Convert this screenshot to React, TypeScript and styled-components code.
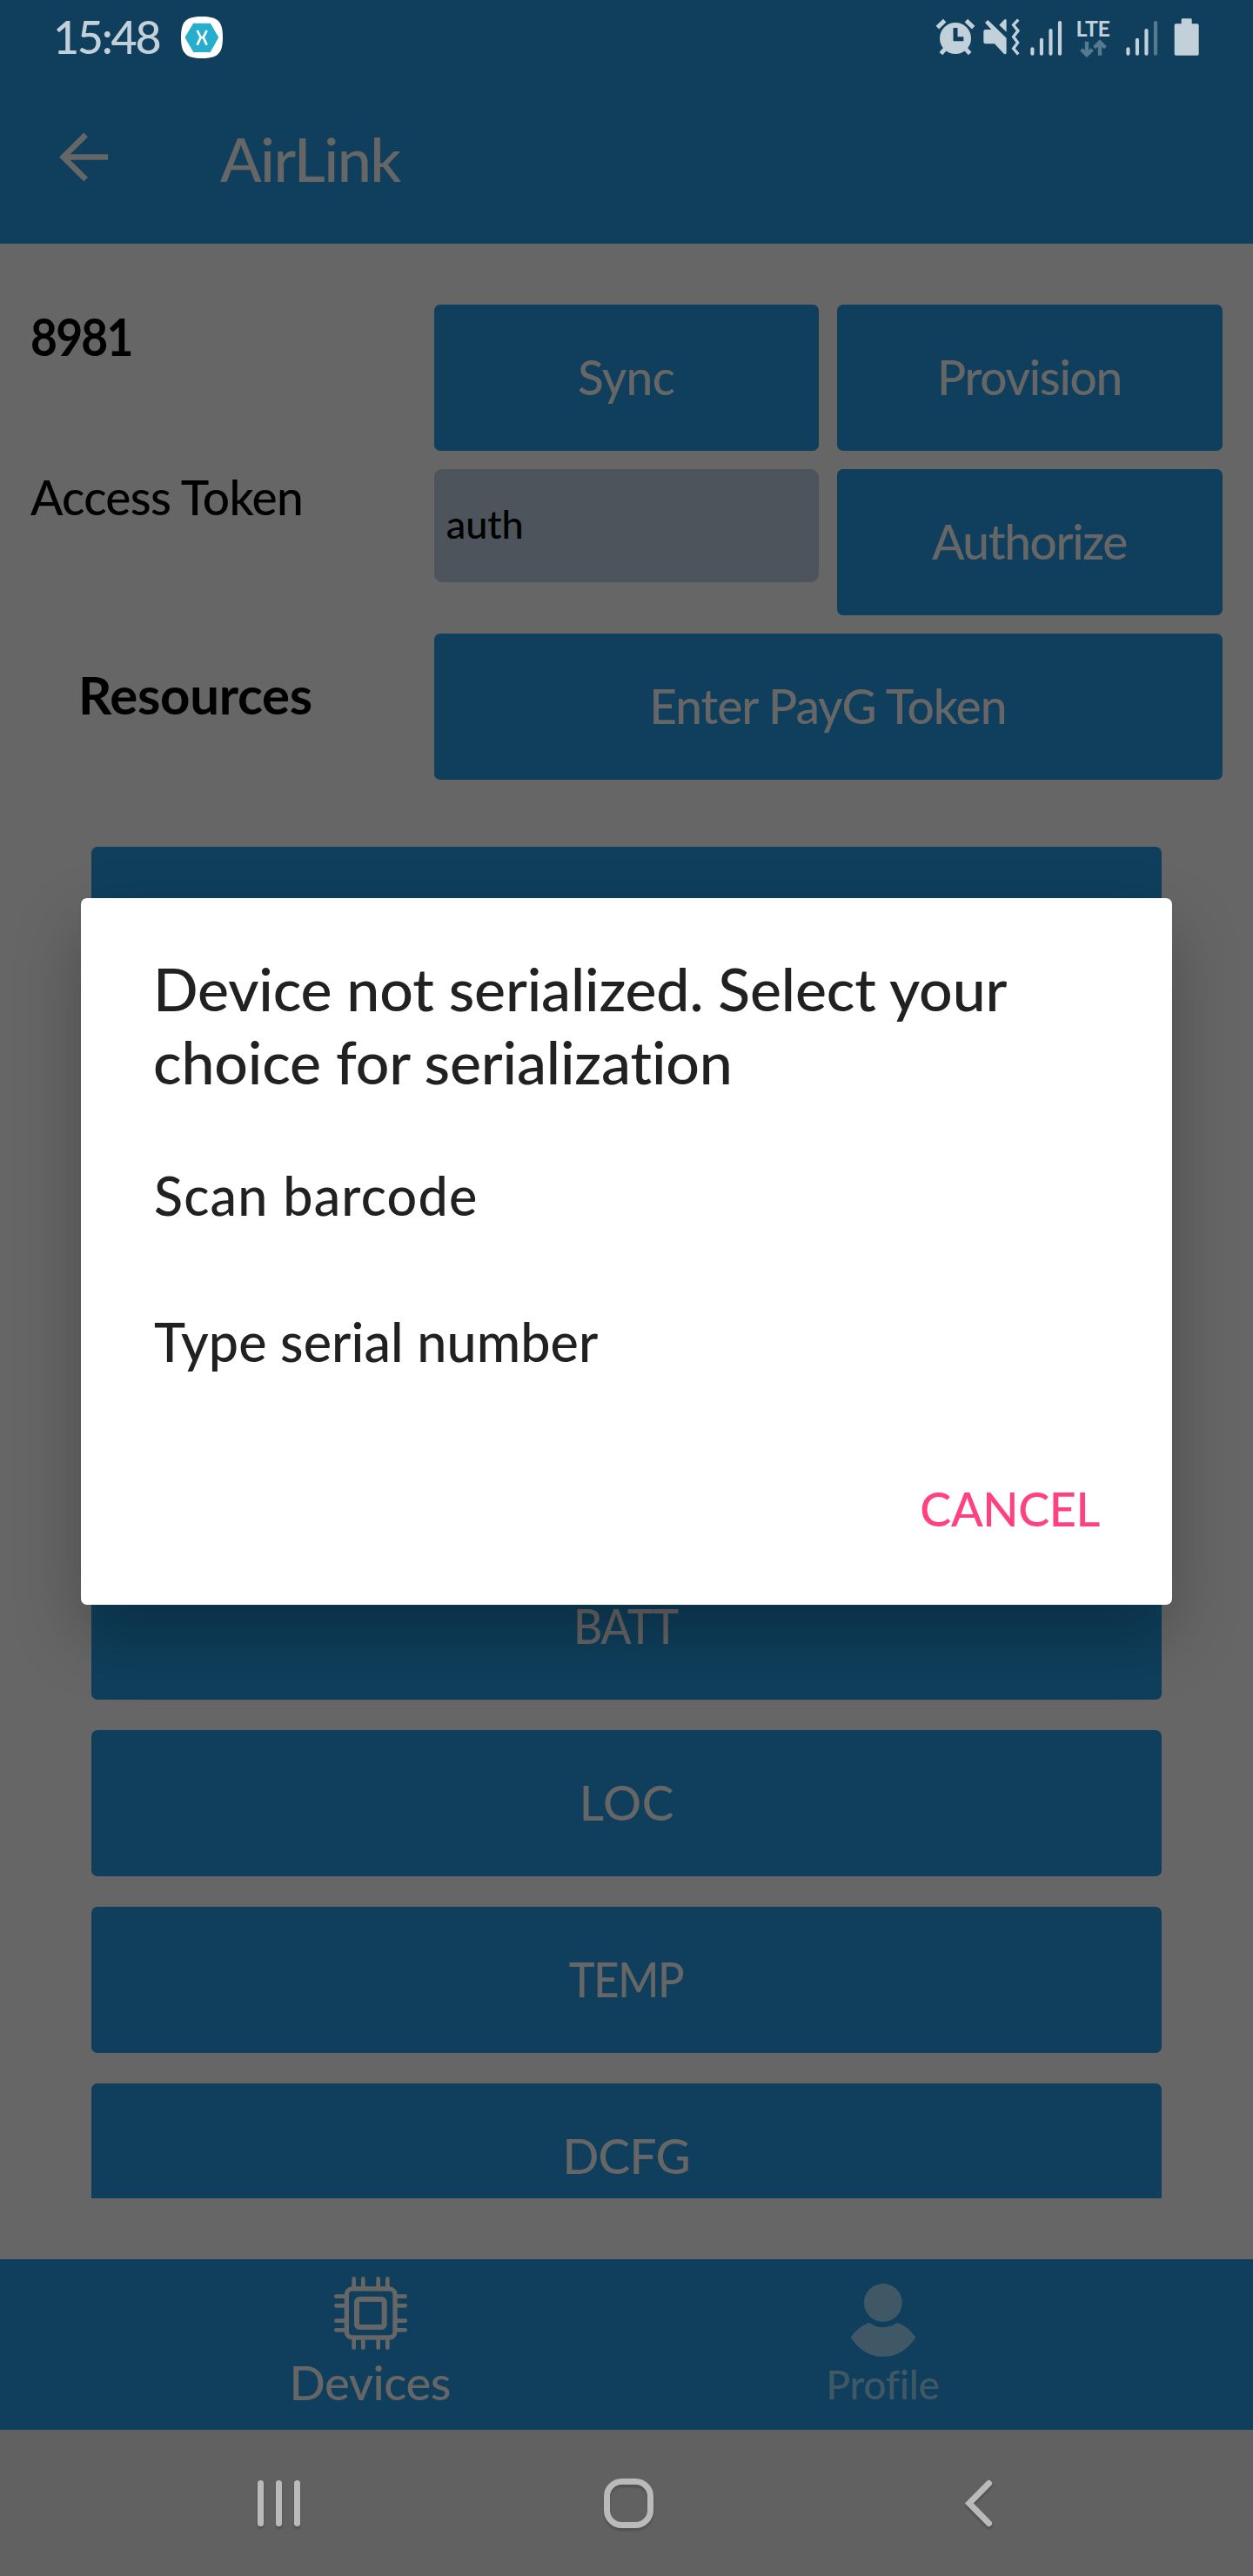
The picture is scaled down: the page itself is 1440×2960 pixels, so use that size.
import React from "react";
import styled, { createGlobalStyle } from "styled-components";

const color = {
  brand: "#0f3f5c",
  page: "#666666",
  onBrand: "#666666",
  inactive: "#405865",
  entry: "#4d545b",
  status: "#c2d0da",
  statusDim: "#567a90",
  systemBar: "#616161",
  systemIcon: "#bababa",
  ink: "#212121",
  accent: "#ff4081",
};

const GlobalStyle = createGlobalStyle`
  *, *::before, *::after { box-sizing: border-box; }
  body { margin: 0; background: ${color.page}; }
  button { border: 0; background: none; padding: 0; font: inherit; color: inherit; }
`;

const Screen = styled.div`
  position: relative;
  display: flex;
  flex-direction: column;
  width: 1440px;
  height: 2960px;
  overflow: hidden;
  background: ${color.page};
  font-family: Lato, "Open Sans", sans-serif;
  font-weight: 500;
  white-space: nowrap;
`;

/* Text whose tracking leaves no trailing space, so it centres on its glyphs. */
const Tracked = styled.span<{ $track?: number; $squeeze?: number; $from?: string }>`
  display: inline-block;
  letter-spacing: ${(p) => p.$track ?? 0}px;
  margin-right: ${(p) => -(p.$track ?? 0)}px;
  transform: ${(p) => (p.$squeeze ? `scaleX(${p.$squeeze})` : "none")};
  transform-origin: ${(p) => p.$from ?? "center"};
`;

/* ---------- status bar ---------- */

const StatusBar = styled.div`
  display: flex;
  justify-content: space-between;
  height: 88px;
  padding: 0 62px 0 61px;
  background: ${color.brand};
  color: ${color.status};
`;

const StatusLeft = styled.div`
  display: flex;
  align-items: center;
  gap: 25px;
`;

const Clock = styled.span`
  padding-bottom: 4px;
  font-size: 52px;
  line-height: 62px;
  letter-spacing: -2.3px;
`;

const StatusRight = styled.div`
  display: flex;
`;

const StatusGlyph = styled.svg<{ $gap?: number }>`
  display: block;
  height: 88px;
  margin-left: ${(p) => p.$gap ?? 0}px;
`;

const Network = styled.div`
  display: flex;
  flex-direction: column;
  align-items: center;
  width: 42px;
  margin-left: 14px;
  padding-top: 19px;
`;

const NetworkName = styled.span`
  font-size: 25px;
  font-weight: 700;
  line-height: 26px;
  letter-spacing: -0.4px;
`;

/* ---------- header ---------- */

const Header = styled.header`
  display: flex;
  align-items: center;
  gap: 128px;
  height: 192px;
  padding: 0 67px 8px;
  background: ${color.brand};
  color: ${color.onBrand};
`;

const HeaderTitle = styled.h1`
  margin: 0;
  padding-top: 3px;
  font-size: 70px;
  font-weight: 500;
  line-height: 84px;
  letter-spacing: -1.6px;
`;

/* ---------- page ---------- */

const Page = styled.main`
  flex: 1;
  min-height: 0;
  padding: 70px 35px 0;
`;

const Controls = styled.section`
  display: grid;
  grid-template-columns: repeat(3, 1fr);
  grid-auto-rows: 168px;
  gap: 21px;
`;

const Label = styled.div<{ $size: number; $line: number; $bold?: boolean; $indent?: number; $drop?: number }>`
  padding: ${(p) => p.$drop ?? 0}px 0 0 ${(p) => p.$indent ?? 0}px;
  font-size: ${(p) => p.$size}px;
  font-weight: ${(p) => (p.$bold ? 700 : 500)};
  line-height: ${(p) => p.$line}px;
  color: #000;
`;

const Button = styled.button<{ $wide?: boolean }>`
  display: flex;
  align-items: center;
  justify-content: center;
  flex: none;
  height: 168px;
  grid-column: ${(p) => (p.$wide ? "span 2" : "auto")};
  padding-bottom: 3px;
  border-radius: 7px;
  background: ${color.brand};
  color: ${color.onBrand};
  font-size: 55px;
  line-height: 66px;
`;

const Entry = styled.div`
  display: flex;
  align-items: center;
  height: 130px;
  padding: 0 14px 4px;
  border-radius: 9px;
  background: ${color.entry};
  color: #000;
  font-size: 45px;
`;

const ResourceList = styled.section`
  display: flex;
  flex-direction: column;
  gap: 35px;
  height: 1553px;
  margin: 77px 70px 0;
  overflow: hidden;
`;

/* ---------- tab bar ---------- */

const TabBar = styled.nav`
  display: grid;
  grid-template-columns: 1fr 1fr;
  height: 196px;
  padding: 0 131px;
  background: ${color.brand};
`;

const Tab = styled.div<{ $active?: boolean }>`
  display: flex;
  flex-direction: column;
  align-items: center;
  gap: 7px;
  padding-top: ${(p) => (p.$active ? 20 : 28)}px;
  color: ${(p) => (p.$active ? color.onBrand : color.inactive)};
  font-size: ${(p) => (p.$active ? 54.5 : 46)}px;
  line-height: ${(p) => (p.$active ? 60 : 50)}px;
`;

/* ---------- system navigation ---------- */

const SystemBar = styled.div`
  display: grid;
  grid-template-columns: repeat(3, 402px);
  place-content: center;
  place-items: center;
  height: 168px;
  padding-left: 5px;
  background: ${color.systemBar};

  svg {
    filter: drop-shadow(0 3px 1px rgba(0, 0, 0, 0.18));
    overflow: visible;
  }
`;

/* ---------- dialog ---------- */

const Overlay = styled.div`
  position: absolute;
  inset: 0;
  display: flex;
  align-items: flex-start;
  justify-content: center;
  padding-top: 1032px;
`;

const Dialog = styled.div`
  display: flex;
  flex-direction: column;
  width: 1254px;
  height: 812px;
  padding: 62px 83px 0 83px;
  border-radius: 7px;
  background: #fff;
  color: ${color.ink};
  box-shadow: 0 34px 76px rgba(0, 0, 0, 0.26);
`;

const DialogTitle = styled.h2`
  margin: 0 0 29px;
  font-size: 68px;
  font-weight: 500;
  line-height: 83.5px;
  letter-spacing: -0.15px;
`;

const Choice = styled.div<{ $track: number }>`
  height: 168px;
  padding-left: 1px;
  font-size: 61px;
  line-height: 168px;
  letter-spacing: ${(p) => p.$track}px;
`;

const DialogAction = styled.button`
  align-self: flex-end;
  margin-top: 76px;
  color: ${color.accent};
  font-size: 54px;
  line-height: 64px;
  letter-spacing: -0.4px;
`;

/* ---------- drawings ---------- */

const BadgeSvg = styled.svg`
  flex: none;
  margin-bottom: 2px;
`;

const AppBadge = () => (
  <BadgeSvg width="48" height="48" viewBox="625 58 144 144">
    <path d="M697 58C752 58 769 75 769 130S752 202 697 202 625 185 625 130 642 58 697 58Z" fill="#fff" />
    <path
      d="M670 85H724L750 130L724 177H670L643 130Z"
      fill="#27aecd"
      stroke="#27aecd"
      strokeWidth="8"
      strokeLinejoin="round"
    />
    <path
      d="M681 106L693 130L681 156M714 106L702 130L714 156M693 130H702"
      fill="none"
      stroke="#fff"
      strokeWidth="8"
    />
  </BadgeSvg>
);

const AlarmIcon = () => (
  <StatusGlyph width={46.7} viewBox="75 0 140 264">
    <g stroke={color.status} strokeWidth="15">
      <path d="M82 95L107 71M206 95L181 71M94 185L110 167M194 185L178 167" />
    </g>
    <circle cx="144" cy="132" r="54" fill={color.status} />
    <path d="M144 96V134H172" fill="none" stroke={color.brand} strokeWidth="15" />
  </StatusGlyph>
);

const MuteIcon = () => (
  <StatusGlyph $gap={6.6} width={43.3} viewBox="235 0 130 264">
    <path
      d="M254 69L318 131V180Q318 190 309 185L277 151H246Q239 151 239 144V109Q239 102 246 102H266L244 78Z"
      fill={color.status}
    />
    <path d="M293 86L310 68Q318 62 318 72V110Z" fill={color.status} />
    <path
      d="M359 68L342 86L358 106L342 127L357 147L342 167L359 187"
      fill="none"
      stroke={color.status}
      strokeWidth="10"
    />
  </StatusGlyph>
);

const SignalIcon = ({ gap, weak }: { gap: number; weak?: boolean }) => (
  <StatusGlyph $gap={gap} width={38} viewBox="0 0 114 264">
    {[163, 131, 99, 72].map((top, i) => (
      <rect
        key={top}
        x={4 + i * 31.6}
        y={top}
        width="12.5"
        height={191 - top}
        rx="6"
        fill={weak && i === 3 ? color.statusDim : color.status}
      />
    ))}
  </StatusGlyph>
);

const TrafficIcon = () => (
  <svg width="31" height="21" viewBox="574 136 93 63" fill="none" stroke={color.statusDim} strokeWidth="13">
    <path d="M598 144V188M579 171L598 190L617 171M643 192V148M624 165L643 146L662 165" />
  </svg>
);

const BatteryIcon = () => (
  <StatusGlyph $gap={17.6} width={29.4} viewBox="895 0 88 264">
    <path
      d="M921 68Q921 64 925 64H953Q957 64 957 68V82H976Q981 82 981 87V186Q981 191 976 191H902Q897 191 897 186V87Q897 82 902 82H921Z"
      fill={color.status}
    />
  </StatusGlyph>
);

const BackArrow = () => (
  <svg width="58" height="57" viewBox="200 455 174 172" fill="none" stroke={color.onBrand} strokeWidth="20">
    <path d="M295 464L217 541L295 618M217 541H372" />
  </svg>
);

const ChipIcon = () => (
  <svg width="84" height="84" viewBox="69 48 252 252" fill="none" stroke={color.onBrand}>
    <rect x="112" y="90" width="167" height="168" rx="20" strokeWidth="16" />
    <rect x="147" y="126" width="95" height="96" rx="10" strokeWidth="18" />
    <g strokeWidth="14" strokeLinecap="round">
      {[137, 169, 221, 253].map((x) => (
        <path key={x} d={`M${x} 55V86M${x} 262V293`} />
      ))}
      {[116, 148, 200, 232].map((y) => (
        <path key={y} d={`M76 ${y}H108M284 ${y}H314`} />
      ))}
    </g>
  </svg>
);

const PersonIcon = () => (
  <svg width="76" height="84" viewBox="49 71 227 253" fill={color.inactive}>
    <circle cx="162" cy="137" r="66" />
    <path d="M50 257Q74 221 110 207Q116 206 120 210Q138 222 162 222T204 210Q209 206 215 207Q251 221 275 257Q232 324 162 324T50 257Z" />
  </svg>
);

const RecentsIcon = () => (
  <svg width="49" height="53" viewBox="0 0 49 53" stroke={color.systemIcon} strokeWidth="7" strokeLinecap="round">
    <path d="M3.5 3.5V49.5M24.5 3.5V49.5M45.5 3.5V49.5" />
  </svg>
);

const HomeIcon = () => (
  <svg width="57" height="57" viewBox="0 0 57 57" fill="none" stroke={color.systemIcon} strokeWidth="7">
    <rect x="3.5" y="3.5" width="50" height="50" rx="17" />
  </svg>
);

const SystemBackIcon = () => (
  <svg width="31" height="53" viewBox="0 0 31 53" fill="none" stroke={color.systemIcon} strokeWidth="7" strokeLinecap="round">
    <path d="M27.5 3.5L4.8 26.5L27.5 49.5" />
  </svg>
);

/* ---------- screen ---------- */

/* Rows without a name sit behind the dialog. */
const resources: { name?: string; track?: number; squeeze?: number }[] = [
  {},
  {},
  {},
  {},
  { name: "BATT", track: -1.5, squeeze: 0.937 },
  { name: "LOC", track: 0.6 },
  { name: "TEMP", track: -1.5, squeeze: 0.92 },
  { name: "DCFG", track: -0.7 },
];

export default function App() {
  return (
    <Screen>
      <GlobalStyle />

      <StatusBar>
        <StatusLeft>
          <Clock>15:48</Clock>
          <AppBadge />
        </StatusLeft>
        <StatusRight>
          <AlarmIcon />
          <MuteIcon />
          <SignalIcon gap={11} />
          <Network>
            <NetworkName>LTE</NetworkName>
            <TrafficIcon />
          </Network>
          <SignalIcon gap={16} weak />
          <BatteryIcon />
        </StatusRight>
      </StatusBar>

      <Header>
        <BackArrow />
        <HeaderTitle>AirLink</HeaderTitle>
      </Header>

      <Page>
        <Controls>
          <Label $size={59} $line={70} $bold $drop={2}>
            <Tracked $track={-2} $squeeze={0.905} $from="left">
              8981
            </Tracked>
          </Label>
          <Button>
            <Tracked $track={-0.7}>Sync</Tracked>
          </Button>
          <Button>
            <Tracked $track={-1.3}>Provision</Tracked>
          </Button>

          <Label $size={55} $line={61} $drop={2}>
            <Tracked $track={-0.7}>Access Token</Tracked>
          </Label>
          <Entry>auth</Entry>
          <Button>
            <Tracked $track={-1.4}>Authorize</Tracked>
          </Button>

          <Label $size={60} $line={60} $bold $indent={55} $drop={40}>
            <Tracked $track={-0.3}>Resources</Tracked>
          </Label>
          <Button $wide>
            <Tracked $track={-1.05}>Enter PayG Token</Tracked>
          </Button>
        </Controls>

        <ResourceList>
          {resources.map((r, i) => (
            <Button key={i}>
              {r.name && (
                <Tracked $track={r.track} $squeeze={r.squeeze}>
                  {r.name}
                </Tracked>
              )}
            </Button>
          ))}
        </ResourceList>
      </Page>

      <TabBar>
        <Tab $active>
          <ChipIcon />
          <Tracked $track={-0.5}>Devices</Tracked>
        </Tab>
        <Tab>
          <PersonIcon />
          <Tracked $track={-0.2}>Profile</Tracked>
        </Tab>
      </TabBar>

      <SystemBar>
        <RecentsIcon />
        <HomeIcon />
        <SystemBackIcon />
      </SystemBar>

      <Overlay>
        <Dialog role="dialog">
          <DialogTitle>
            Device not serialized. Select your
            <br />
            choice for serialization
          </DialogTitle>
          <Choice $track={1.2}>Scan barcode</Choice>
          <Choice $track={0.1}>Type serial number</Choice>
          <DialogAction>CANCEL</DialogAction>
        </Dialog>
      </Overlay>
    </Screen>
  );
}
